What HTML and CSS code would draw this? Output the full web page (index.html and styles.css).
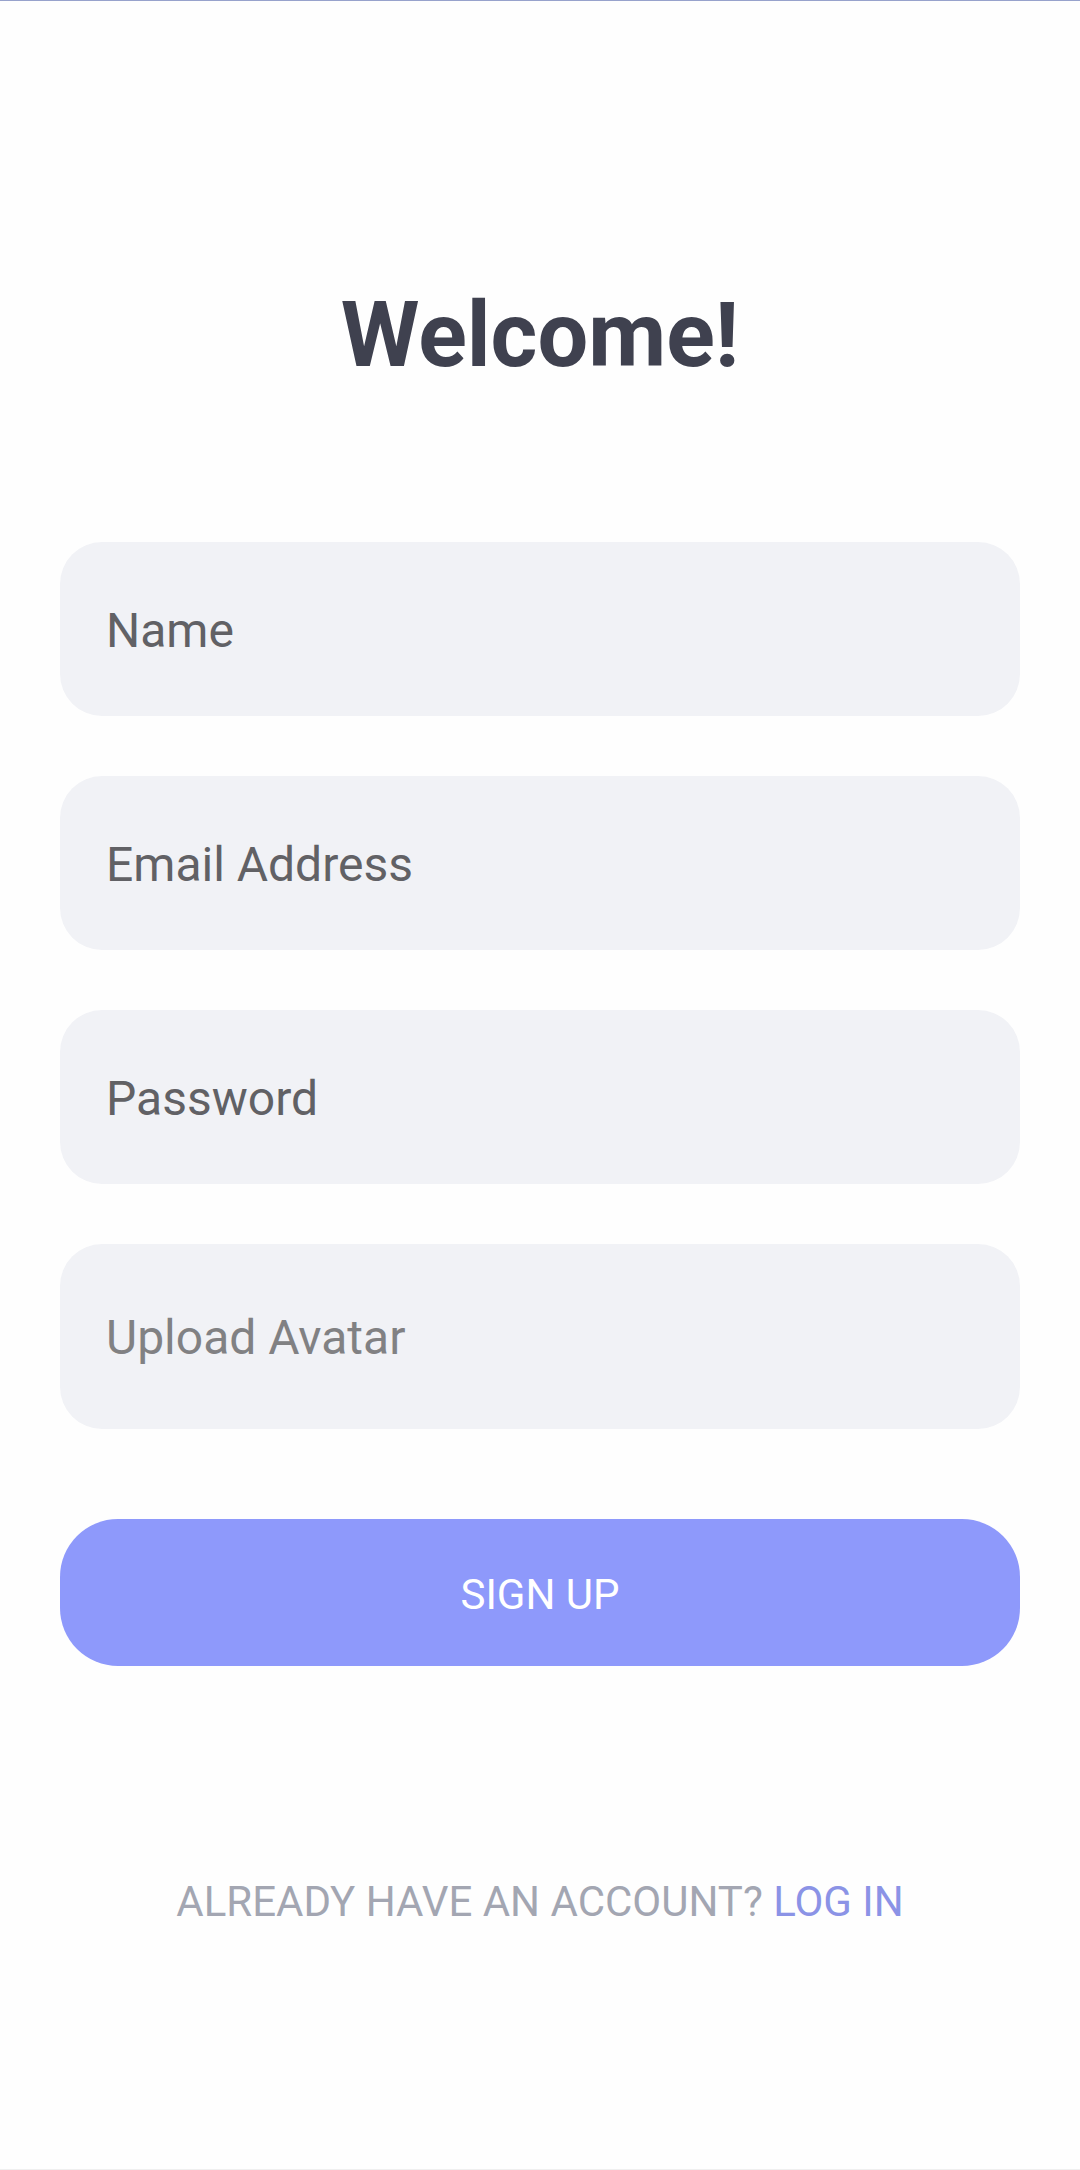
FILE: index.html
```html
<!DOCTYPE html>
<html lang="en">
<head>
<meta charset="utf-8">
<title>Welcome</title>
<link rel="stylesheet" href="styles.css">
</head>
<body>
<div class="screen">
  <h1 class="title">Welcome!</h1>
  <form class="form">
    <div class="field">Name</div>
    <div class="field">Email Address</div>
    <div class="field">Password</div>
    <div class="field field-upload">Upload Avatar</div>
    <div class="btn">SIGN UP</div>
  </form>
  <p class="footer">ALREADY HAVE AN ACCOUNT? <span class="link">LOG IN</span></p>
</div>
</body>
</html>
```

FILE: styles.css
```css
html, body {
  margin: 0;
  padding: 0;
  background: #fefefe;
}
.screen {
  box-sizing: border-box;
  height: 2170px;
  border-top: 1px solid #97a2cc;
  border-bottom: 1px solid #efefef;
  display: flex;
  flex-direction: column;
  padding: 0 60px;
  font-family: Roboto, "Liberation Sans", sans-serif;
}
.title {
  margin: 290px 0 0;
  height: 90px;
  line-height: 90px;
  font-size: 90px;
  font-weight: 700;
  color: #3f414f;
  text-align: center;
}
.form {
  margin-top: 161px;
  display: flex;
  flex-direction: column;
  gap: 60px;
}
.field {
  box-sizing: border-box;
  height: 174px;
  border-radius: 42px;
  background: #f1f2f6;
  display: flex;
  align-items: center;
  padding: 2px 0 0 46px;
  font-size: 48px;
  color: #616165;
}
.field-upload {
  height: 185px;
  color: #818183;
}
.btn {
  margin-top: 30px;
  height: 147px;
  border-radius: 58px;
  background: #8e99fb;
  color: #ffffff;
  display: flex;
  align-items: center;
  justify-content: center;
  padding-top: 3px;
  box-sizing: border-box;
  font-size: 42px;
}
.footer {
  margin: 211px 0 0;
  text-align: center;
  font-size: 42px;
  color: #a3a6b2;
}
.link {
  color: #8b93e6;
}
```
